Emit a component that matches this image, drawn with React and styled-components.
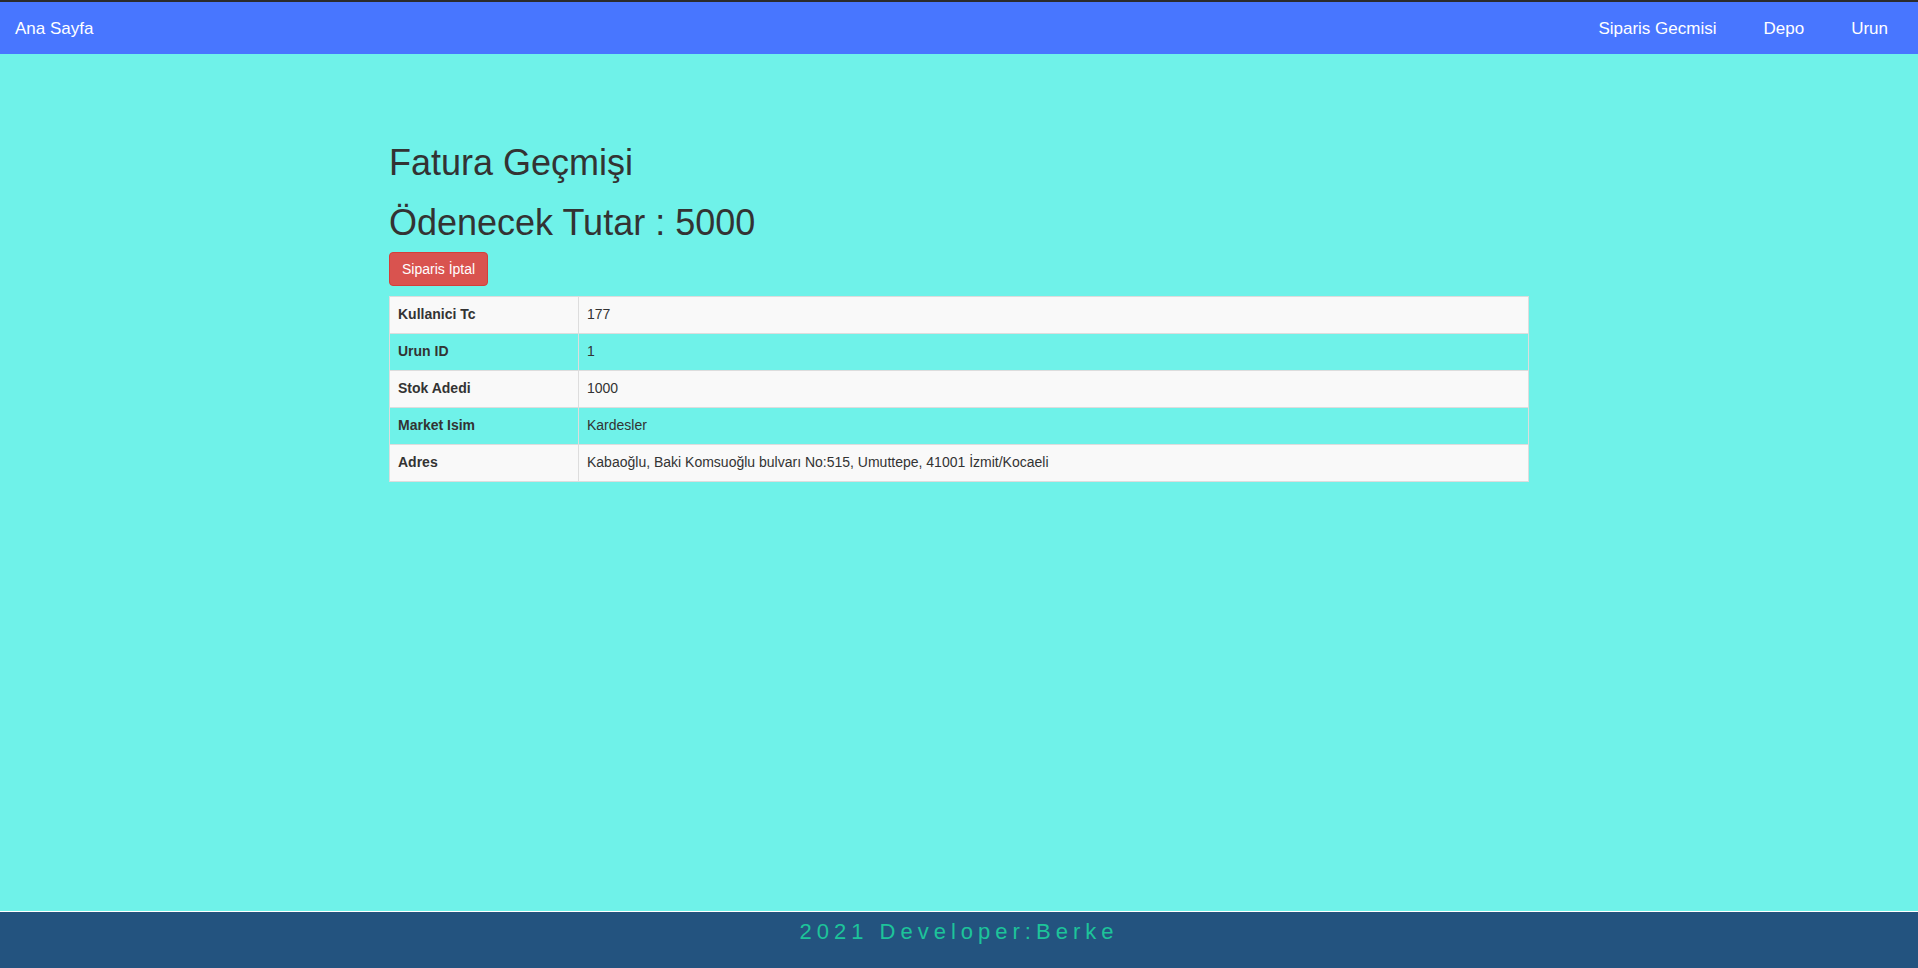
import styled, { createGlobalStyle } from "styled-components"

const GlobalStyle = createGlobalStyle`
    * {
        box-sizing: border-box;
    }

    body {
        margin: 0;
        font-family: "Liberation Sans", Arial, sans-serif;
        font-size: 14px;
        line-height: 1.42857;
        color: #333;
        background-color: #6ff2e9;
    }
`

const orderInfo = [
    { label: "Kullanici Tc", value: "177" },
    { label: "Urun ID", value: "1" },
    { label: "Stok Adedi", value: "1000" },
    { label: "Market Isim", value: "Kardesler" },
    { label: "Adres", value: "Kabaoğlu, Baki Komsuoğlu bulvarı No:515, Umuttepe, 41001 İzmit/Kocaeli" },
]

export default function App() {
    return (
        <>
            <GlobalStyle />
            <Page>
                <Navbar>
                    <Brand href="#">Ana Sayfa</Brand>
                    <NavList>
                        <NavLink href="#">Siparis Gecmisi</NavLink>
                        <NavLink href="#">Depo</NavLink>
                        <NavLink href="#">Urun</NavLink>
                    </NavList>
                </Navbar>

                <Main>
                    <Container>
                        <Title>Fatura Geçmişi</Title>
                        <Title $last>Ödenecek Tutar : 5000</Title>
                        <DangerButton type="button">Siparis İptal</DangerButton>
                        <InfoTable>
                            <tbody>
                                {orderInfo.map(row => (
                                    <tr key={row.label}>
                                        <Th>{row.label}</Th>
                                        <Td>{row.value}</Td>
                                    </tr>
                                ))}
                            </tbody>
                        </InfoTable>
                    </Container>
                </Main>

                <Footer>2021 Developer:Berke</Footer>
            </Page>
        </>
    )
}

const Page = styled.div`
    min-height: 100vh;
    display: flex;
    flex-direction: column;
`

const Navbar = styled.nav`
    display: flex;
    justify-content: space-between;
    align-items: center;
    height: 54px;
    padding: 0 15px;
    background-color: #4876ff;
    border-top: 2px solid #2b2b2b;
    font-size: 17px;
    line-height: 51px;
`

const Brand = styled.a`
    color: #fff;
    text-decoration: none;
`

const NavList = styled.div`
    display: flex;
    gap: 17px;
`

const NavLink = styled.a`
    padding: 0 15px;
    color: #fff;
    text-decoration: none;
`

const Main = styled.main`
    flex: 1;
    padding-top: 89px;
`

const Container = styled.div`
    width: 1140px;
    margin: 0 auto;
`

const Title = styled.h1`
    margin: 0 0 ${props => props.$last ? "10px" : "20px"};
    font-size: 36px;
    font-weight: 500;
    line-height: 1.1;
    color: #333;
`

const DangerButton = styled.button`
    display: block;
    padding: 6px 12px;
    font-family: inherit;
    font-size: 14px;
    line-height: 20px;
    color: #fff;
    background-color: #d9534f;
    border: 1px solid #d43f3a;
    border-radius: 4px;
    cursor: pointer;
`

const InfoTable = styled.table`
    width: 100%;
    margin-top: 10px;
    border-collapse: collapse;
    border: 1px solid #ddd;

    tr:nth-child(odd) {
        background-color: #f9f9f9;
    }
`

const Th = styled.th`
    width: 189px;
    padding: 8px;
    text-align: left;
    font-weight: bold;
    border: 1px solid #ddd;
`

const Td = styled.td`
    padding: 8px;
    border: 1px solid #ddd;
`

const Footer = styled.footer`
    height: 57px;
    padding-top: 9px;
    text-align: center;
    font-size: 22px;
    line-height: 22px;
    letter-spacing: 5px;
    color: #1dc49a;
    background-color: #23537f;
    border-top: 1px solid #fff;
`
